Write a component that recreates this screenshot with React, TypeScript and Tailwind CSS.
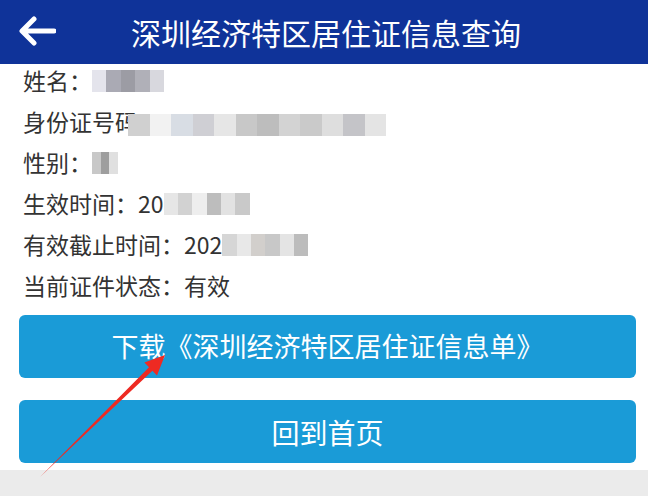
import React from 'react'

const font = { fontFamily: '"Noto Sans CJK SC", "Noto Sans", sans-serif' }

function Blur({ w, tones }: { w: number; tones: string[] }) {
  // pixelated mosaic standing in for masked personal data
  return (
    <span className="inline-flex h-[22px] align-middle blur-[0.6px]" style={{ width: w }}>
      {tones.map((t, i) => (
        <span key={i} className="flex-1 h-full" style={{ background: t }} />
      ))}
    </span>
  )
}

function Row({ children }: { children: React.ReactNode }) {
  return <div className="h-[41px] flex items-center text-[23px] text-[#333333]">{children}</div>
}

export default function App() {
  return (
    <div className="relative w-[648px] h-[496px] bg-[#ebebeb] overflow-hidden" style={font}>
      <header className="h-16 bg-[#0f3399] flex items-center relative">
        <svg className="absolute left-[18px] top-[16px]" width="38" height="30" viewBox="0 0 38 30" fill="none">
          <path d="M36 15H5M16 3L4 15l12 12" stroke="white" strokeWidth="5" strokeLinecap="round" strokeLinejoin="round" />
        </svg>
        <h1 className="w-full text-center text-white text-[30px] leading-none pl-[4px]">深圳经济特区居住证信息查询</h1>
      </header>

      <div className="bg-white pb-[7px]">
        <div className="px-[23px] -mt-1">
          <Row>
            <span>姓名：</span>
            <Blur w={72} tones={['#e4e4ec', '#aaaab4', '#9c9ca4', '#b0b0b8', '#d8d8de']} />
          </Row>
          <Row>
            <span>身份证号码</span>
            <span className="ml-[-10px]"><Blur w={258} tones={['#d0d0d0', '#f2f2f2', '#d8dde4', '#cfcfd4', '#e6e6e6', '#c8c8c8', '#bdbdbd', '#d3d3d3', '#cacaca', '#dedede', '#c4c4c8', '#e4e4e4']} /></span>
          </Row>
          <Row>
            <span>性别：</span>
            <Blur w={26} tones={['#c8c8c8', '#9e9e9e', '#e0e0e0']} />
          </Row>
          <Row>
            <span>生效时间：20</span>
            <Blur w={86} tones={['#e6e6e6', '#d2d2d2', '#eeeeee', '#bdbdbd', '#e2e2e2', '#c9c9c9']} />
          </Row>
          <Row>
            <span>有效截止时间：202</span>
            <Blur w={86} tones={['#d6d6d6', '#e8e8e8', '#d2cfcc', '#c8c8c8', '#e4e4e4', '#bcbcbc']} />
          </Row>
          <Row>
            <span>当前证件状态：有效</span>
          </Row>
        </div>

        <div className="pl-[19px] pr-[12px] pt-[9px] flex flex-col gap-[22px]">
          <button className="h-[63px] w-full rounded-md bg-[#1a9bd7] text-white text-[27px]">
            下载《深圳经济特区居住证信息单》
          </button>
          <button className="h-[63px] w-full rounded-md bg-[#1a9bd7] text-white text-[28px]">回到首页</button>
        </div>
      </div>

      <svg className="absolute left-0 top-0 pointer-events-none" width="648" height="496">
        <polygon points="40,477 149,367.2 144.4,362.6 165,355 157,375.4 152.4,370.8" fill="#ee2a22" />
      </svg>
    </div>
  )
}
